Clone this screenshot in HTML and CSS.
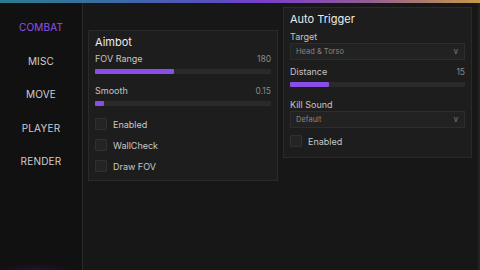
FILE: index.html
```html
<!DOCTYPE html>
<html lang="en">
<head>
    <meta charset="UTF-8">
    <meta name="viewport" content="width=device-width, initial-scale=1.0">
    <title>Menu</title>
    <link rel="stylesheet" href="styles.css">
</head>
<body>
    <div class="top-bar"></div>
    <div class="window">
        <nav class="sidebar">
            <div class="tab active">COMBAT</div>
            <div class="tab">MISC</div>
            <div class="tab">MOVE</div>
            <div class="tab">PLAYER</div>
            <div class="tab">RENDER</div>
        </nav>
        <main class="content">
            <div class="column left-col">
                <section class="panel">
                    <div class="panel-title">Aimbot</div>
                    <div class="slider">
                        <div class="slider-head"><span>FOV Range</span><span class="value">180</span></div>
                        <div class="track"><div class="fill" style="width: 45%"></div></div>
                    </div>
                    <div class="slider">
                        <div class="slider-head"><span>Smooth</span><span class="value">0.15</span></div>
                        <div class="track"><div class="fill" style="width: 5%"></div></div>
                    </div>
                    <div class="checks">
                        <label class="check"><span class="box"></span>Enabled</label>
                        <label class="check"><span class="box"></span>WallCheck</label>
                        <label class="check"><span class="box"></span>Draw FOV</label>
                    </div>
                </section>
            </div>
            <div class="column right-col">
                <section class="panel panel-tall">
                    <div class="panel-title">Auto Trigger</div>
                    <div class="field">
                        <div class="field-label">Target</div>
                        <div class="select"><span>Head &amp; Torso</span><span class="caret">v</span></div>
                    </div>
                    <div class="slider">
                        <div class="slider-head"><span>Distance</span><span class="value">15</span></div>
                        <div class="track"><div class="fill" style="width: 22%"></div></div>
                    </div>
                    <div class="field">
                        <div class="field-label">Kill Sound</div>
                        <div class="select"><span>Default</span><span class="caret">v</span></div>
                    </div>
                    <div class="checks">
                        <label class="check"><span class="box"></span>Enabled</label>
                    </div>
                </section>
            </div>
        </main>
    </div>
</body>
</html>
```

FILE: styles.css
```css
* {
    box-sizing: border-box;
}

body {
    margin: 0;
    width: 480px;
    height: 270px;
    overflow: hidden;
    background: #171717;
    font-family: Inter, "Noto Sans", sans-serif;
    color: #d4d4d4;
}

.top-bar {
    height: 3px;
    background: linear-gradient(90deg, #2a7d8d 0%, #3d6aa6 25%, #5a4fc0 45%, #7a3ecb 55%, #8f5a98 75%, #c49a48 100%);
}

.window {
    display: flex;
    height: 267px;
    border-right: 2px solid #222;
}

.sidebar {
    width: 83px;
    flex-shrink: 0;
    background: #111111 radial-gradient(ellipse 40px 6px at 45% 100%, rgba(70, 30, 150, 0.25), transparent);
    border-right: 1px solid #2a2a2a;
    padding-top: 8px;
    display: flex;
    flex-direction: column;
}

.tab {
    height: 33.5px;
    line-height: 33.5px;
    text-align: center;
    font-size: 10px;
    letter-spacing: 0.2px;
    color: #cfcfcf;
}

.tab.active {
    color: #8c55ea;
}

.content {
    flex: 1;
    display: flex;
    align-items: flex-start;
    gap: 5px;
    padding: 0 6px 0 5px;
}

.column {
    width: 190px;
}

.left-col {
    margin-top: 27px;
}

.right-col {
    margin-top: 4px;
    width: 189px;
}

.panel {
    background: #1d1d1d;
    border: 1px solid #2a2a2a;
    padding: 4px 6px 8px 6px;
}

.panel-tall {
    padding-bottom: 10px;
}

.panel-title {
    font-size: 11px;
    line-height: 14px;
    color: #ececec;
    margin-bottom: 4px;
}

.slider {
    margin-bottom: 11px;
}

.slider-head {
    display: flex;
    justify-content: space-between;
    font-size: 9px;
    line-height: 12px;
    color: #c4c4c4;
}

.value {
    font-size: 8.5px;
    color: #8a8a8a;
}

.track {
    height: 5px;
    margin-top: 4px;
    background: #2a2a2a;
    border-radius: 1px;
}

.fill {
    height: 100%;
    background: #8a4ee8;
    border-radius: 1px;
}

.field {
    padding-top: 1px;
    margin-bottom: 6px;
}

.field-label {
    font-size: 9px;
    line-height: 12px;
    color: #c4c4c4;
}

.select {
    display: flex;
    justify-content: space-between;
    align-items: center;
    height: 17px;
    padding: 0 6px 0 5px;
    background: #222222;
    border: 1px solid #2d2d2d;
    font-size: 7.5px;
    color: #858585;
}

.caret {
    font-size: 7.5px;
}

.checks {
    display: flex;
    flex-direction: column;
    gap: 9px;
    padding-top: 1px;
}

.check {
    display: flex;
    align-items: center;
    height: 12px;
    font-size: 9px;
    color: #c8c8c8;
}

.box {
    width: 12px;
    height: 12px;
    margin-right: 6px;
    background: #242424;
    border: 1px solid #303030;
    border-radius: 1px;
}
```
